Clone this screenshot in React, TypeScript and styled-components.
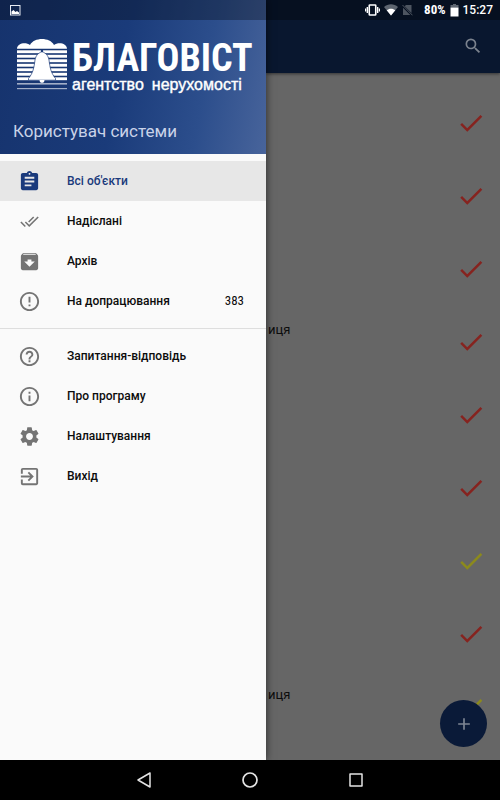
import React from "react";
import styled, { createGlobalStyle } from "styled-components";
import {
  MdAdd,
  MdArchive,
  MdAssignment,
  MdCheck,
  MdDoneAll,
  MdErrorOutline,
  MdExitToApp,
  MdHelpOutline,
  MdInfoOutline,
  MdSearch,
  MdSettings,
} from "react-icons/md";
import type { IconType } from "react-icons";

const GlobalStyle = createGlobalStyle`
  *, *::before, *::after { box-sizing: border-box; }
  body {
    margin: 0;
    background: #000;
    font-family: Roboto, "Noto Sans", sans-serif;
  }
  button { font: inherit; border: 0; padding: 0; background: none; cursor: pointer; }
  a { color: inherit; text-decoration: none; }
  svg { display: block; flex: none; }
`;

const Screen = styled.div`
  position: relative;
  display: flex;
  flex-direction: column;
  min-height: 100vh;
`;

const StatusBar = styled.div`
  position: absolute;
  inset: 0 0 auto;
  z-index: 3;
  display: flex;
  align-items: center;
  height: 20px;
  padding: 0 7px 0 10px;
  background: rgba(0, 0, 0, 0.3);
  color: #fff;
`;

const StatusIcons = styled.div`
  display: flex;
  align-items: center;
  gap: 4px;
  margin-left: auto;
`;

const BatteryLevel = styled.span`
  margin-left: 7px;
  font: 700 13px/20px "Roboto Condensed", Roboto, sans-serif;
`;

const Clock = styled.span`
  font: 500 12px/20px Roboto, sans-serif;
`;

const Body = styled.div`
  flex: 1;
  display: flex;
`;

const Drawer = styled.aside`
  position: relative;
  z-index: 2;
  flex: none;
  width: min(266px, 80%);
  background: #fafafa;
  box-shadow: 0 0 8px rgba(0, 0, 0, 0.6);
`;

const DrawerHeader = styled.header`
  display: flex;
  flex-direction: column;
  justify-content: space-between;
  height: 154px;
  padding: 39px 13px 12px;
  background: linear-gradient(100deg, #16336d 0%, #1a3b7a 45%, #2c4e8c 75%, #48649b 100%);
`;

const Brand = styled.div`
  display: flex;
  gap: 5px;
  padding-left: 4px;
  color: #fff;
`;

const BrandText = styled.div`
  display: flex;
  flex-direction: column;
`;

const BrandName = styled.span`
  font: 700 38px/38px "Roboto Condensed", Roboto, sans-serif;
  white-space: nowrap;
`;

const BrandLine = styled.span`
  display: flex;
  gap: 8px;
  font: 400 16px/16px "Liberation Sans", sans-serif;
  -webkit-text-stroke: 0.4px currentColor;
  white-space: nowrap;
`;

const UserName = styled.span`
  color: #c9d3e8;
  font-size: 17px;
  line-height: 22px;
`;

const Menu = styled.nav`
  padding-top: 7px;
`;

const MenuGroup = styled.ul`
  margin: 0;
  padding: 0;
  list-style: none;

  & + & {
    margin-top: 7px;
    padding-top: 7px;
    border-top: 1px solid #dedede;
  }
`;

const MenuItem = styled.a<{ $active?: boolean }>`
  display: flex;
  align-items: center;
  height: 40px;
  padding: 0 22px 0 18px;
  background: ${(p) => (p.$active ? "#e7e7e7" : "transparent")};
  color: ${(p) => (p.$active ? "#1a3a7c" : "#0c0c0c")};
  font-size: 12px;
  font-weight: 500;
`;

const MenuIcon = styled.span<{ $active?: boolean }>`
  display: flex;
  justify-content: center;
  width: 23px;
  margin-right: 26px;
  color: ${(p) => (p.$active ? "#1a3a7c" : "#747474")};
`;

const Count = styled.span`
  margin-left: auto;
  font: 400 13px/16px "Roboto Condensed", Roboto, sans-serif;
`;

const Content = styled.main`
  position: relative;
  flex: 1;
  min-width: 0;
  background: #666;
`;

const AppBar = styled.header`
  display: flex;
  align-items: flex-end;
  justify-content: flex-end;
  height: 73px;
  padding: 0 17px 17px;
  background: #09172f;
  box-shadow: 0 1px 3px rgba(0, 0, 0, 0.5);
`;

const IconButton = styled.button`
  color: #7b828d;
`;

const ObjectList = styled.ul`
  margin: 0;
  padding: 13px 0 0;
  list-style: none;
`;

const ObjectRow = styled.li<{ $tone: "red" | "yellow" }>`
  display: flex;
  align-items: center;
  justify-content: space-between;
  height: 73px;
  padding: 0 14px 0 2px;

  svg { color: ${(p) => (p.$tone === "red" ? "#86231f" : "#8c8a1c")}; }
`;

const ObjectText = styled.span`
  padding-bottom: 24px;
  color: #0c0c0c;
  font-size: 13px;
  line-height: 16px;
`;

const AddButton = styled.button`
  position: absolute;
  right: 13px;
  bottom: 13px;
  display: grid;
  place-items: center;
  width: 47px;
  height: 47px;
  border-radius: 50%;
  background: #0a1a38;
  color: #7d8593;
`;

const SystemNav = styled.nav`
  display: flex;
  justify-content: center;
  align-items: center;
  gap: 86px;
  height: 40px;
  background: #000;
`;

const BellLogo = () => {
  const bands = [11.3, 15.8, 20.3, 24.8, 29.3, 33.8, 38.3];
  return (
    <svg width="50" height="52" viewBox="0 0 50 52" fill="currentColor" aria-hidden="true">
      <path d="M0 9.800C0 4 9 2.500 13 6C17-2 33-2 37 6C41 2.500 50 4 50 9.800Z" />
      {bands.map((y) => (
        <rect key={y} x="0" y={y} width="50" height="2.900" />
      ))}
      <rect x="0" y="44" width="50" height="1.600" opacity=".6" />
      <rect x="0" y="49" width="50" height="1.200" opacity=".6" />
      <path
        d="M25 12.500C21 14.500 19 16 18 21C17 29 16 34 11.500 39.500V41.200H38.500V39.500C34 34 33 29 32 21C31 16 29 14.500 25 12.500Z"
        stroke="#1a3978"
        strokeWidth=".7"
      />
      <path d="M22.500 41H27.500C27.500 44.800 22.500 44.800 22.500 41Z" />
      <circle cx="25" cy="12" r="1.200" fill="#1a3978" />
    </svg>
  );
};

const PictureIcon = () => (
  <svg width="11" height="11" viewBox="0 0 11 11" aria-hidden="true">
    <rect x=".5" y=".5" width="9.500" height="9.500" fill="none" stroke="#e6eaf2" />
    <path d="M1.500 9V6.500L3.500 5L5.500 7L7 6L9 7.500V9Z" fill="#fff" />
  </svg>
);

const VibrateIcon = () => (
  <svg width="15" height="12" viewBox="0 0 15 12" fill="none" stroke="#fff" aria-hidden="true">
    <rect x="4.250" y="1" width="6.500" height="10" rx=".6" strokeWidth="1.600" />
    <path d="M2.300 3V9M12.700 3V9" strokeWidth="1.400" />
    <path d="M.6 4.500V7.500M14.400 4.500V7.500" strokeWidth="1.200" />
  </svg>
);

const WifiIcon = () => (
  <svg width="14" height="12" viewBox="0 0 14 12" aria-hidden="true">
    <path d="M0 3C4-.6 10-.6 14 3L7 11.500Z" fill="#5d6570" />
    <path d="M2.700 6.300C5 4.100 9 4.100 11.300 6.300L7 11.500Z" fill="#fff" />
  </svg>
);

const NoSimIcon = () => (
  <svg width="11" height="12" viewBox="0 0 11 12" aria-hidden="true">
    <path d="M4 1H9.500V9L2.700 2.300ZM1 3.800L8.300 11H1Z" fill="#4d5560" />
    <path d="M.5 1L10.500 11.300" stroke="#4d5560" />
  </svg>
);

const BatteryIcon = () => (
  <svg width="9" height="13" viewBox="0 0 9 13" aria-hidden="true">
    <path d="M3 0H6V1H8.500V3.500H.5V1H3Z" fill="#5d6570" />
    <path d="M.5 3.500H8.500V12.500H.5Z" fill="#fff" />
  </svg>
);

interface Entry {
  label: string;
  icon: IconType;
  size?: number;
  active?: boolean;
  count?: number;
}

const groups: Entry[][] = [
  [
    { label: "Всі об'єкти", icon: MdAssignment, active: true },
    { label: "Надіслані", icon: MdDoneAll, size: 19 },
    { label: "Архів", icon: MdArchive },
    { label: "На допрацювання", icon: MdErrorOutline, count: 383 },
  ],
  [
    { label: "Запитання-відповідь", icon: MdHelpOutline },
    { label: "Про програму", icon: MdInfoOutline },
    { label: "Налаштування", icon: MdSettings },
    { label: "Вихід", icon: MdExitToApp },
  ],
];

const objects: { text?: string; tone: "red" | "yellow" }[] = [
  { tone: "red" },
  { tone: "red" },
  { tone: "red" },
  { tone: "red", text: "иця" },
  { tone: "red" },
  { tone: "red" },
  { tone: "yellow" },
  { tone: "red" },
  { tone: "yellow", text: "иця" },
];

export default function App() {
  return (
    <Screen>
      <GlobalStyle />
      <StatusBar>
        <PictureIcon />
        <StatusIcons>
          <VibrateIcon />
          <WifiIcon />
          <NoSimIcon />
          <BatteryLevel>80%</BatteryLevel>
          <BatteryIcon />
          <Clock>15:27</Clock>
        </StatusIcons>
      </StatusBar>
      <Body>
        <Drawer>
          <DrawerHeader>
            <Brand>
              <BellLogo />
              <BrandText>
                <BrandName>БЛАГОВІСТ</BrandName>
                <BrandLine>
                  <span>агентство</span>
                  <span>нерухомості</span>
                </BrandLine>
              </BrandText>
            </Brand>
            <UserName>Користувач системи</UserName>
          </DrawerHeader>
          <Menu>
            {groups.map((group, g) => (
              <MenuGroup key={g}>
                {group.map(({ label, icon: Icon, size = 23, active, count }) => (
                  <li key={label}>
                    <MenuItem href="#" $active={active} aria-current={active ? "page" : undefined}>
                      <MenuIcon $active={active}>
                        <Icon size={size} />
                      </MenuIcon>
                      {label}
                      {count !== undefined && <Count>{count}</Count>}
                    </MenuItem>
                  </li>
                ))}
              </MenuGroup>
            ))}
          </Menu>
        </Drawer>
        <Content>
          <AppBar>
            <IconButton type="button" aria-label="Пошук">
              <MdSearch size={20} />
            </IconButton>
          </AppBar>
          <ObjectList>
            {objects.map((item, i) => (
              <ObjectRow key={i} $tone={item.tone}>
                <ObjectText>{item.text}</ObjectText>
                <MdCheck size={30} />
              </ObjectRow>
            ))}
          </ObjectList>
          <AddButton type="button" aria-label="Додати">
            <MdAdd size={20} />
          </AddButton>
        </Content>
      </Body>
      <SystemNav>
        <IconButton type="button" aria-label="Назад">
          <svg width="20" height="20" viewBox="0 0 20 20" fill="none" stroke="#e4e4e4" strokeWidth="1.500" strokeLinejoin="round">
            <path d="M16 3V17L4 10Z" />
          </svg>
        </IconButton>
        <IconButton type="button" aria-label="Головний екран">
          <svg width="20" height="20" viewBox="0 0 20 20" fill="none" stroke="#e4e4e4" strokeWidth="1.700">
            <circle cx="10" cy="10" r="7" />
          </svg>
        </IconButton>
        <IconButton type="button" aria-label="Останні програми">
          <svg width="20" height="20" viewBox="0 0 20 20" fill="none" stroke="#e4e4e4" strokeWidth="1.500" strokeLinejoin="round">
            <rect x="4" y="4" width="12" height="12" />
          </svg>
        </IconButton>
      </SystemNav>
    </Screen>
  );
}
